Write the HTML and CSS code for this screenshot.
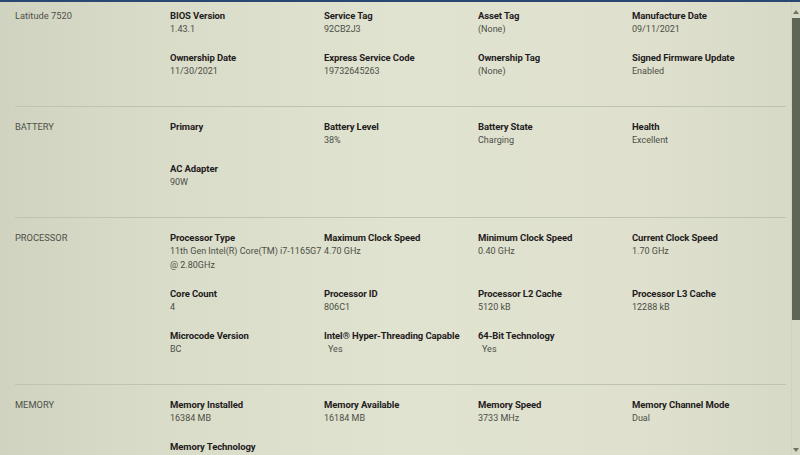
FILE: index.html
```html
<!DOCTYPE html>
<html lang="en">
  <head>
    <meta charset="UTF-8" />
    <title>System Information</title>
    <link rel="stylesheet" href="styles.css">
  </head>
  <body>
    <div id="screen">
      <div id="info-list">

        <div class="section first">
          <div class="section-name">Latitude 7520</div>
          <div class="fields">
            <div class="field"><div class="field-label">BIOS Version</div><div class="field-value">1.43.1</div></div>
            <div class="field"><div class="field-label">Service Tag</div><div class="field-value">92CB2J3</div></div>
            <div class="field"><div class="field-label">Asset Tag</div><div class="field-value">(None)</div></div>
            <div class="field"><div class="field-label">Manufacture Date</div><div class="field-value">09/11/2021</div></div>
            <div class="field"><div class="field-label">Ownership Date</div><div class="field-value">11/30/2021</div></div>
            <div class="field"><div class="field-label">Express Service Code</div><div class="field-value">19732645263</div></div>
            <div class="field"><div class="field-label">Ownership Tag</div><div class="field-value">(None)</div></div>
            <div class="field"><div class="field-label">Signed Firmware Update</div><div class="field-value">Enabled</div></div>
          </div>
        </div>

        <div class="section">
          <div class="section-name">BATTERY</div>
          <div class="fields">
            <div class="field"><div class="field-label">Primary</div></div>
            <div class="field"><div class="field-label">Battery Level</div><div class="field-value">38%</div></div>
            <div class="field"><div class="field-label">Battery State</div><div class="field-value">Charging</div></div>
            <div class="field"><div class="field-label">Health</div><div class="field-value">Excellent</div></div>
            <div class="field"><div class="field-label">AC Adapter</div><div class="field-value">90W</div></div>
          </div>
        </div>

        <div class="section">
          <div class="section-name">PROCESSOR</div>
          <div class="fields">
            <div class="field"><div class="field-label">Processor Type</div><div class="field-value">11th Gen Intel(R) Core(TM) i7-1165G7 @ 2.80GHz</div></div>
            <div class="field"><div class="field-label">Maximum Clock Speed</div><div class="field-value">4.70 GHz</div></div>
            <div class="field"><div class="field-label">Minimum Clock Speed</div><div class="field-value">0.40 GHz</div></div>
            <div class="field"><div class="field-label">Current Clock Speed</div><div class="field-value">1.70 GHz</div></div>
            <div class="field"><div class="field-label">Core Count</div><div class="field-value">4</div></div>
            <div class="field"><div class="field-label">Processor ID</div><div class="field-value">806C1</div></div>
            <div class="field"><div class="field-label">Processor L2 Cache</div><div class="field-value">5120 kB</div></div>
            <div class="field"><div class="field-label">Processor L3 Cache</div><div class="field-value">12288 kB</div></div>
            <div class="field"><div class="field-label">Microcode Version</div><div class="field-value">BC</div></div>
            <div class="field"><div class="field-label">Intel&reg; Hyper-Threading Capable</div><div class="field-value indented">Yes</div></div>
            <div class="field"><div class="field-label">64-Bit Technology</div><div class="field-value indented">Yes</div></div>
          </div>
        </div>

        <div class="section">
          <div class="section-name">MEMORY</div>
          <div class="fields">
            <div class="field"><div class="field-label">Memory Installed</div><div class="field-value">16384 MB</div></div>
            <div class="field"><div class="field-label">Memory Available</div><div class="field-value">16184 MB</div></div>
            <div class="field"><div class="field-label">Memory Speed</div><div class="field-value">3733 MHz</div></div>
            <div class="field"><div class="field-label">Memory Channel Mode</div><div class="field-value">Dual</div></div>
            <div class="field"><div class="field-label">Memory Technology</div><div class="field-value">LPDDR4x SDRAM</div></div>
          </div>
        </div>

      </div>

      <div id="scrollbar">
        <div class="scroll-arrow up"></div>
        <div class="scroll-thumb"></div>
        <div class="scroll-track"></div>
        <div class="scroll-arrow down"></div>
      </div>
    </div>
  </body>
</html>
```

FILE: styles.css
```css
body {
  margin: 0;
  padding: 0;
  overflow: hidden;
  font-family: Roboto, "Liberation Sans", Arial, sans-serif;
}
#screen {
  display: flex;
  width: 800px;
  height: 455px;
  overflow: hidden;
  border-top: 2px solid #2c4674;
  box-sizing: border-box;
  background: linear-gradient(90deg, #cfd3bf 0%, #d9dcc8 20%, #e0e3d0 50%, #dfe1ce 80%, #d6d9c5 100%);
}
#info-list {
  flex: 1;
  padding: 0 5px 0 15px;
}
.section {
  display: flex;
  padding: 13px 0 28px 0;
  border-bottom: 1px solid #bfc3b1;
}
.section.first {
  padding-top: 7px;
}
.section-name {
  width: 155px;
  flex-shrink: 0;
  font-size: 9.3px;
  line-height: 13px;
  color: #4f5149;
}
.fields {
  display: grid;
  grid-template-columns: repeat(4, 154px);
  row-gap: 15px;
}
.field {
  padding-right: 2px;
}
.field-label {
  font-size: 9.5px;
  font-weight: bold;
  letter-spacing: -0.1px;
  line-height: 13px;
  color: #1f201d;
}
.field-value {
  font-size: 9px;
  line-height: 14px;
  color: #4c4e47;
}
.field-value.indented {
  padding-left: 4px;
}

#scrollbar {
  width: 10px;
  display: flex;
  flex-direction: column;
  align-items: center;
  border-left: 1px solid #cfd2c0;
}
.scroll-arrow {
  width: 0;
  height: 0;
  border-left: 3px solid transparent;
  border-right: 3px solid transparent;
  margin: 8px 0 4px 0;
}
.scroll-arrow.up {
  border-bottom: 4px solid #6d7263;
}
.scroll-arrow.down {
  border-top: 4px solid #6d7263;
  margin: 2px 0 3px 0;
}
.scroll-thumb {
  width: 100%;
  height: 302px;
  background: #5f6655;
}
.scroll-track {
  flex: 1;
}
```
